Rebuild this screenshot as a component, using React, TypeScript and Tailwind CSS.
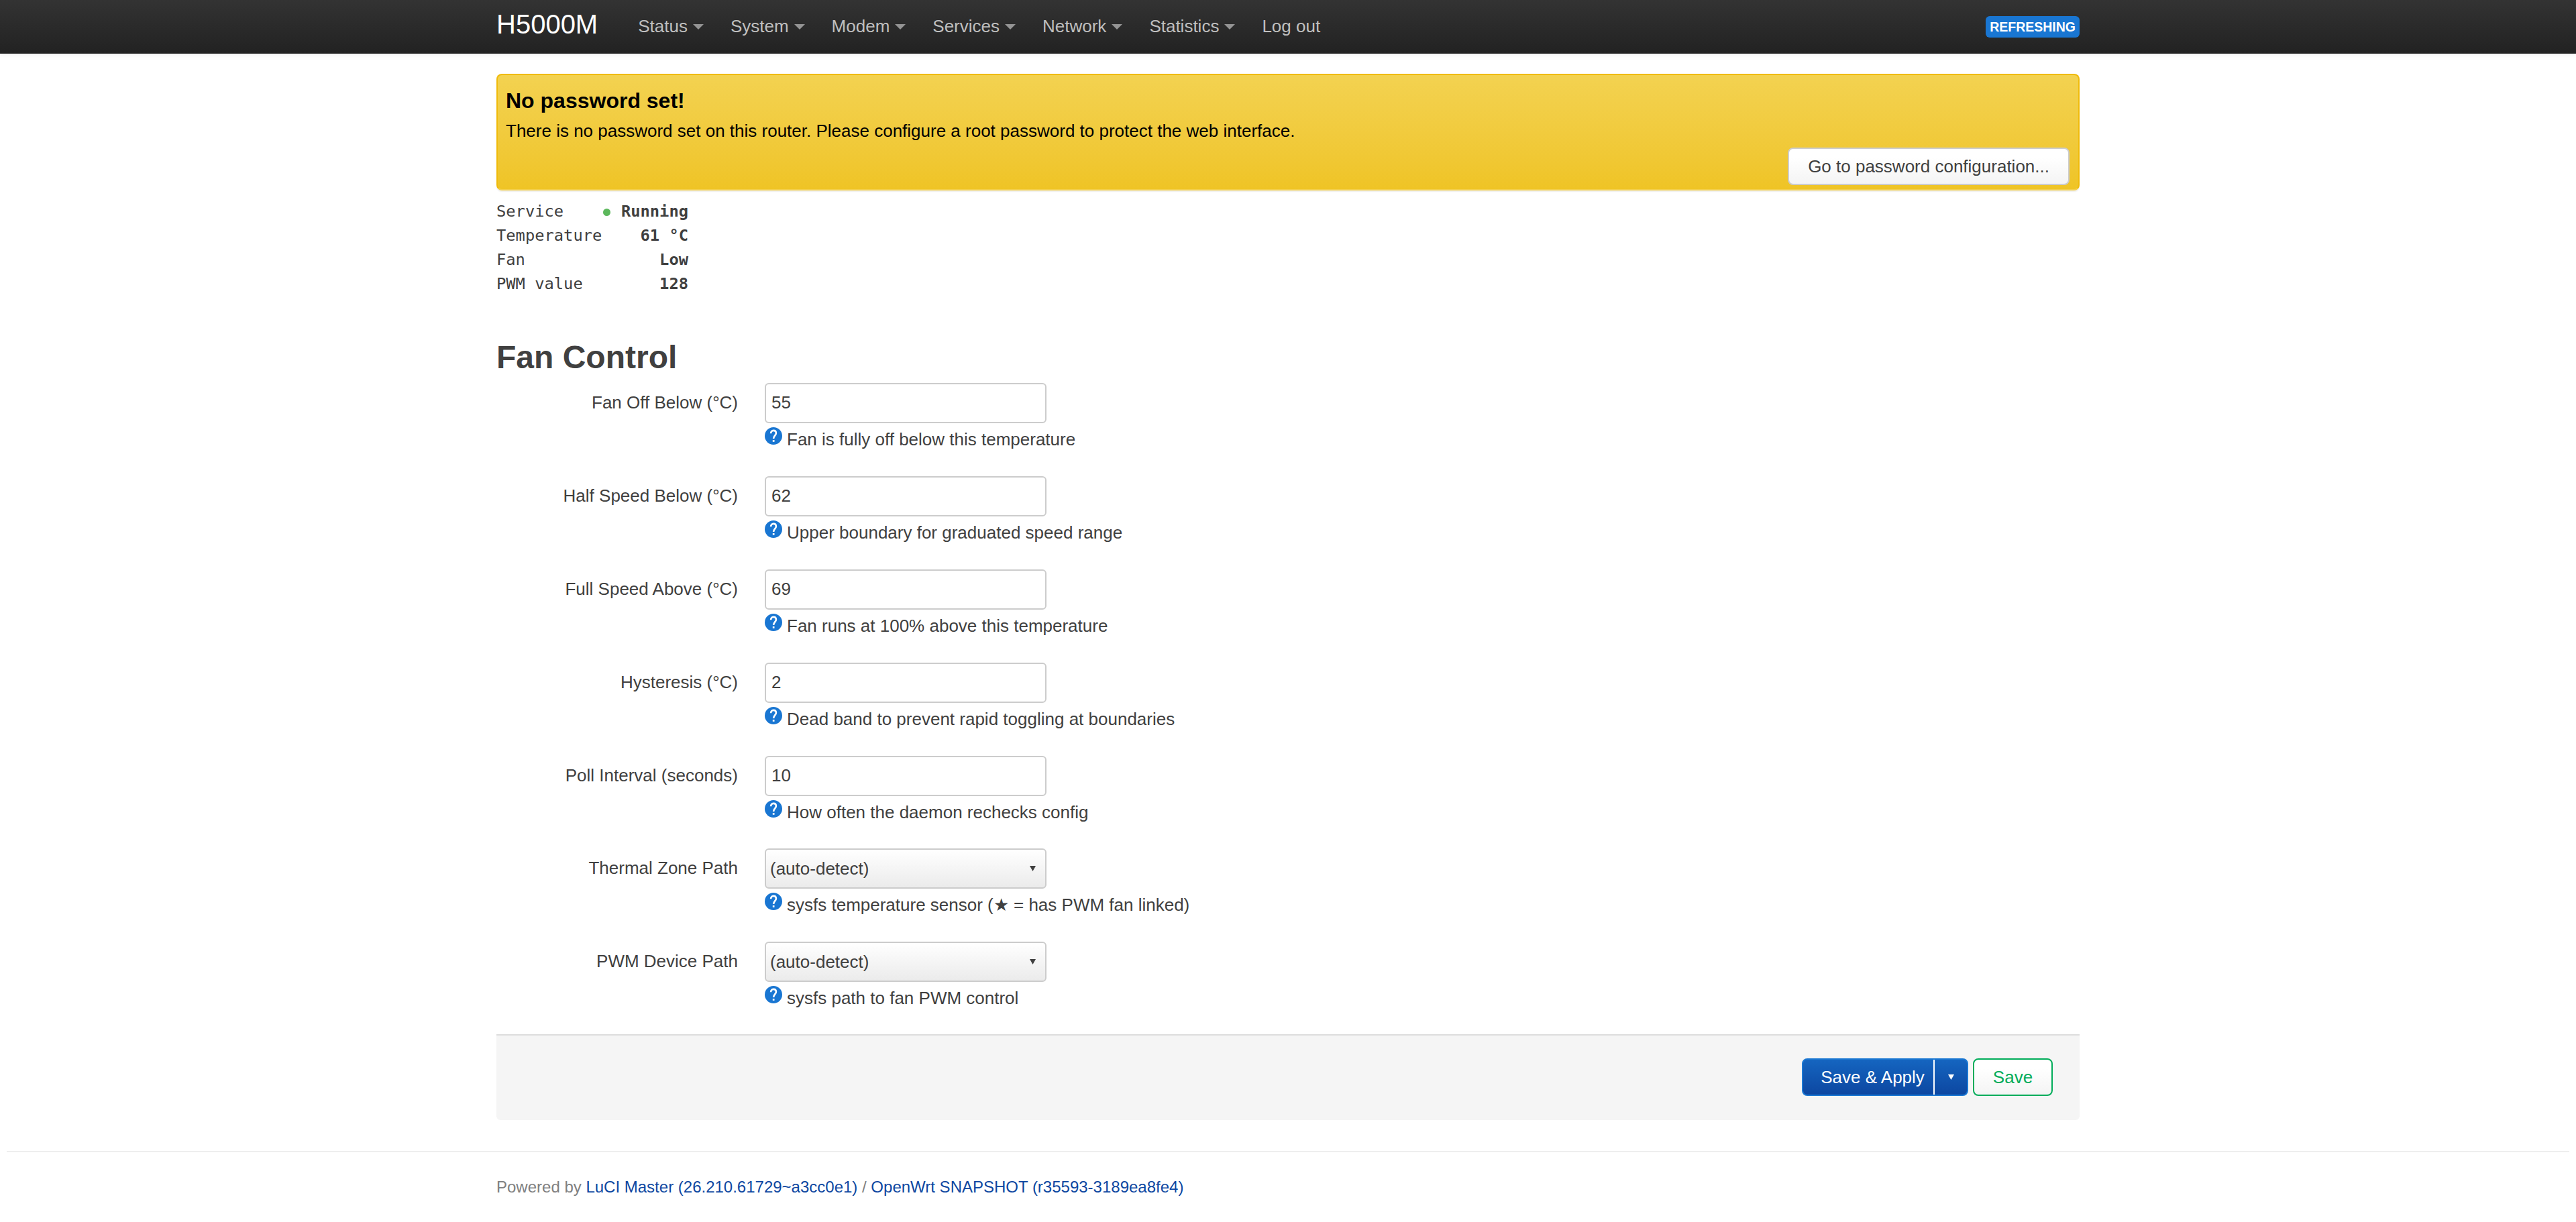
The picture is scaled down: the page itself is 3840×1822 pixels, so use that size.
import React from "react";

const navItems: INavItem[] = [
    { name: "Status", dropdown: true },
    { name: "System", dropdown: true },
    { name: "Modem", dropdown: true },
    { name: "Services", dropdown: true },
    { name: "Network", dropdown: true },
    { name: "Statistics", dropdown: true },
    { name: "Log out", dropdown: false },
];

const statusRows: IStatusRow[] = [
    { label: "Service", value: "Running", active: true },
    { label: "Temperature", value: "61 °C" },
    { label: "Fan", value: "Low" },
    { label: "PWM value", value: "128" },
];

const inputFields: IField[] = [
    { label: "Fan Off Below (°C)", value: "55", help: "Fan is fully off below this temperature" },
    { label: "Half Speed Below (°C)", value: "62", help: "Upper boundary for graduated speed range" },
    { label: "Full Speed Above (°C)", value: "69", help: "Fan runs at 100% above this temperature" },
    { label: "Hysteresis (°C)", value: "2", help: "Dead band to prevent rapid toggling at boundaries" },
    { label: "Poll Interval (seconds)", value: "10", help: "How often the daemon rechecks config" },
];

const selectFields: IField[] = [
    { label: "Thermal Zone Path", value: "(auto-detect)", help: "sysfs temperature sensor (★ = has PWM fan linked)", select: true },
    { label: "PWM Device Path", value: "(auto-detect)", help: "sysfs path to fan PWM control", select: true },
];

const Arrow = () => (
    <svg viewBox="0 0 9 8" className="h-2 w-[9px] fill-current">
        <path d="M0 0h9L4.5 8z" />
    </svg>
);

const HelpIcon = () => (
    <svg viewBox="0 0 26 26" className="mt-[3px] size-[26px] shrink-0">
        <circle cx="13" cy="13" r="13" fill="#1976d2" />
        <path d="M9.1 9.2C9.1 6.6 10.6 4.9 13 4.9s3.9 1.6 3.9 3.9c0 3.5-3.8 3.9-3.8 8.3" fill="none" stroke="#fff" strokeWidth="2.6" />
        <rect x="11.8" y="19" width="2.7" height="2.8" fill="#fff" />
    </svg>
);

const Header = () => (
    <header className="h-20 bg-linear-to-b from-[#333] to-[#222] shadow-[0_2px_6px_rgba(0,0,0,0.06)]">
        <div className="mx-auto flex w-[2360px] items-start">
            <a className="pr-10 pt-4 text-[40px] leading-10 text-white">H5000M</a>
            <nav className="flex flex-1 pt-[21px]">
                {navItems.map((item) => (
                    <a key={item.name} className="flex items-center px-5 leading-9 text-[#bfbfbf]">
                        {item.name}
                        {item.dropdown && (
                            <svg viewBox="0 0 16 8" className="ml-2 mt-0.5 h-2 w-4 fill-[#949494]">
                                <path d="M0 0h16L8 8z" />
                            </svg>
                        )}
                    </a>
                ))}
            </nav>
            <span className="mt-6 h-8 rounded-md bg-[#1976d2] px-1.5 text-[19.5px] font-bold leading-8 text-white">
                REFRESHING
            </span>
        </div>
    </header>
);

const PasswordAlert = () => (
    <div className="mt-[30px] h-[174px] rounded-lg border-2 border-[#f0bb0a] border-b-[#f3cf4c] bg-linear-to-b from-[#f3d250] to-[#efc425] pl-3 pr-[13px] pt-5 text-black shadow-[0_2px_2px_rgba(0,0,0,0.07)]">
        <h4 className="text-[32px] font-bold leading-9">No password set!</h4>
        <p className="mt-[9px] leading-9">
            There is no password set on this router. Please configure a root password to protect the web interface.
        </p>
        <div className="mt-[7px] flex justify-end">
            <button className="h-14 rounded-lg border-2 border-[#ccc] bg-linear-to-b from-white from-25% to-[#f4f4f4] px-7 leading-9 text-[#404040]">
                Go to password configuration...
            </button>
        </div>
    </div>
);

const StatusTable = () => (
    <div className="mt-[13px] w-[286px] font-['DejaVu_Sans_Mono',monospace] text-[23.75px] leading-9">
        {statusRows.map((row) => (
            <div key={row.label} className="flex h-9 justify-between">
                <span>{row.label}</span>
                <span className="flex items-center font-bold">
                    {row.active && <i className="mr-4 mt-0.5 size-[11px] rounded-full bg-[#5cb85c]" />}
                    {row.value}
                </span>
            </div>
        ))}
    </div>
);

const Field: React.FC<IField> = ({ label, value, help, select }) => (
    <div className="flex h-[139px] items-start">
        <label className="w-[360px] pt-[11px] text-right leading-9">{label}</label>
        <div className="ml-10">
            {
                select ?
                    <div className="flex h-[60px] w-[420px] items-center justify-between rounded-md border-2 border-[#ccc] bg-linear-to-b from-white to-[#ebebeb] pl-1.5 pr-3.5">
                        {value}
                        <Arrow />
                    </div> :
                    <input
                        className="block h-[60px] w-[420px] rounded-md border-2 border-[#ccc] bg-white px-2 pb-0.5 outline-none"
                        defaultValue={value}
                    />
            }
            <div className="flex pt-[3px] leading-9">
                <HelpIcon />
                <span className="ml-[7px] mt-[3px]">{help}</span>
            </div>
        </div>
    </div>
);

const App = () => {
    return (
        <div className="min-h-[1822px] bg-white font-['Liberation_Sans',Arial,sans-serif] text-[26px] leading-9 text-[#404040]">
            <Header />
            <main className="mx-auto w-[2360px]">
                <PasswordAlert />
                <StatusTable />
                <h3 className="mt-14 h-[74px] text-[48px] font-bold leading-[72px]">Fan Control</h3>
                <div className="h-[694px]">
                    {inputFields.map((field) => (
                        <Field key={field.label} {...field} />
                    ))}
                </div>
                <div className="h-[277px]">
                    {selectFields.map((field) => (
                        <Field key={field.label} {...field} />
                    ))}
                </div>
                <div className="flex h-32 justify-end rounded-b-md border-t-2 border-[#ddd] bg-[#f5f5f5] pr-10 pt-[34px]">
                    <div className="flex h-14 overflow-hidden rounded-lg border-2 border-[#1976d2] bg-linear-to-b from-[#1565c0] to-[#0d47a1] text-white">
                        <button className="h-full w-[194px] pl-[13px]">Save &amp; Apply</button>
                        <button className="flex h-full w-[50px] items-center justify-center border-l-2 border-white">
                            <Arrow />
                        </button>
                    </div>
                    <button className="ml-[7px] h-14 w-[119px] rounded-lg border-2 border-[#00ac59] bg-linear-to-b from-white from-25% to-[#f4f4f4] text-[#00ac59]">
                        Save
                    </button>
                </div>
            </main>
            <hr className="mx-2.5 mt-[46px] border-t-2 border-[#eee]" />
            <footer className="mx-auto mt-[34px] w-[2360px] text-2xl leading-9 text-[#808080]">
                Powered by <a className="text-[#0d47a1]">LuCI Master (26.210.61729~a3cc0e1)</a> / <a className="text-[#0d47a1]">OpenWrt SNAPSHOT (r35593-3189ea8fe4)</a>
            </footer>
        </div>
    );
}

export default App;

interface INavItem { name: string; dropdown: boolean };
interface IStatusRow { label: string; value: string; active?: boolean };
interface IField { label: string; value: string; help: string; select?: boolean };
